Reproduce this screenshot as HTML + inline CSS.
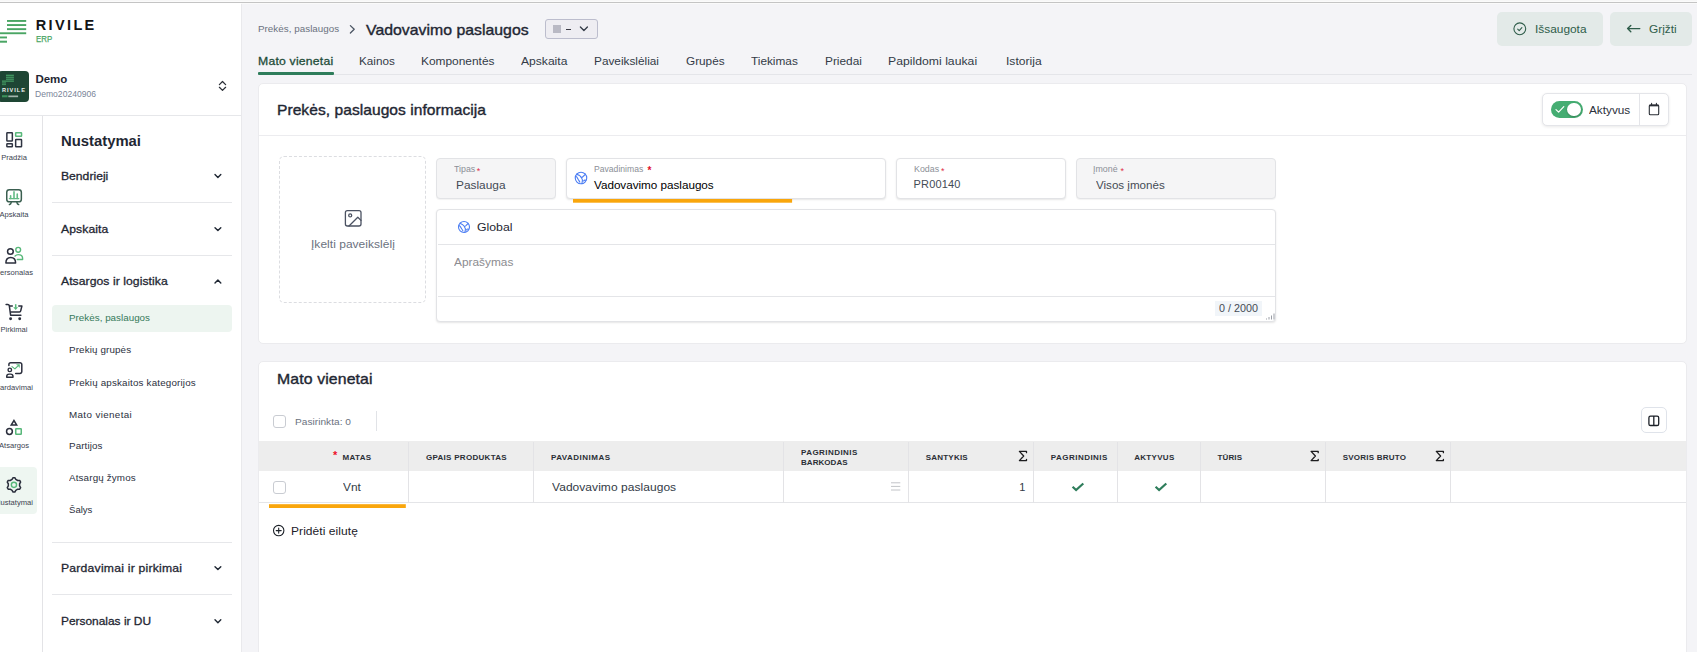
<!DOCTYPE html>
<html lang="lt"><head><meta charset="utf-8"><title>Rivile ERP</title>
<style>
*{box-sizing:border-box;margin:0;padding:0}
html,body{width:1697px;height:652px;overflow:hidden;background:#f4f4f7}
body{font-family:"Liberation Sans",sans-serif;-webkit-font-smoothing:antialiased}
#app{position:relative;width:1697px;height:652px;overflow:hidden;background:#f4f4f7}
.t{position:absolute;white-space:nowrap;font-family:"Liberation Sans",sans-serif}
.b{position:absolute}
svg{position:absolute;overflow:visible}
.card{background:#fff;border:1px solid #ebebee;border-radius:5px}
.fld{border:1px solid #e2e3e6;border-radius:4px;background:#fff;box-shadow:0 1px 2px rgba(0,0,0,.10)}
.fld.dis{background:#f5f5f6;box-shadow:0 1px 1px rgba(0,0,0,.05)}
.hl{height:1px;background:#e6e7ea}
.vl{width:1px;background:#e3e3e6}
.cb{width:13px;height:13px;border:1px solid #c9ccd2;border-radius:3px;background:#fff}
.btn{background:#e3eae8;border-radius:5px}

</style></head>
<body>
<div id="app">
<!-- browser top strip -->
<div class="b" style="left:0;top:0;width:1697px;height:2px;background:#f7f7f7"></div>
<div class="b" style="left:0;top:1px;width:1697px;height:1px;background:#fbfbfb"></div>
<div class="b" style="left:0;top:2px;width:1697px;height:1px;background:#c4c4c4"></div>
<div class="b" style="left:0;top:3px;width:1697px;height:1px;background:#fafafa"></div>

<!-- sidebar -->
<div class="b" style="left:0;top:3px;width:241px;height:649px;background:#fff"></div>
<div class="b vl" style="left:241px;top:4px;height:648px;background:#e9e9ec"></div>
<div class="b hl" style="left:0;top:115px;width:241px"></div>
<div class="b vl" style="left:42px;top:116px;height:536px"></div>

<!-- logo -->
<svg style="left:0;top:0" width="100" height="50" viewBox="0 0 100 50">
  <g fill="#4aa564">
    <rect x="7" y="20" width="19.2" height="1.9"/>
    <rect x="7" y="24.1" width="19.2" height="1.9"/>
    <rect x="7" y="28.2" width="19.2" height="1.9"/>
    <rect x="0" y="32.3" width="26.2" height="1.9"/>
    <rect x="0" y="36.5" width="7" height="1.9"/>
    <rect x="0" y="40.7" width="7" height="2"/>
  </g>
</svg>

<!-- company avatar -->
<div class="b" style="left:-2px;top:71px;width:31px;height:31px;border-radius:4px;background:#1e4634"></div>
<svg style="left:0;top:70px" width="30" height="34" viewBox="0 70 30 34">
  <g fill="#46a367">
    <rect x="6" y="74.700" width="7.900" height="1.150"/>
    <rect x="6" y="76.650" width="7.900" height="1.150"/>
    <rect x="6" y="78.600" width="7.900" height="1.150"/>
    <rect x="2" y="80.550" width="11.900" height="1.150"/>
    <rect x="2" y="82.400" width="4" height="1.100" opacity=".9"/>
    <rect x="2" y="84.100" width="4" height="1" opacity=".8"/>
  </g>
  <text x="1.900" y="92.300" font-family="Liberation Sans, sans-serif" font-weight="700" font-size="5.600" letter-spacing="1.020" fill="#eef2ef">RIVILE</text>
  <rect x="2" y="95.200" width="5.600" height="2.100" fill="#3f9a5f" opacity=".9"/>
  <rect x="8.300" y="95.500" width="9.800" height="1.700" fill="#cfdad4" opacity=".75"/>
</svg>
<svg style="left:216px;top:78px" width="14" height="16" viewBox="216 78 14 16" fill="none" stroke="#2b2f36" stroke-width="1.25" stroke-linecap="round" stroke-linejoin="round">
  <path d="M219.4 84.6l3.1-3.1 3.1 3.1M219.4 87.3l3.1 3.1 3.1-3.1"/>
</svg>

<!-- rail selected -->
<div class="b" style="left:-6px;top:467px;width:42.5px;height:46.5px;border-radius:4px;background:#eef6f1"></div>

<!-- rail icons -->
<svg style="left:0;top:125px" width="42" height="380" viewBox="0 125 42 380" fill="none" stroke-linecap="round" stroke-linejoin="round">
  <!-- Pradzia -->
  <g stroke="#2f3442" stroke-width="1.5" stroke-linejoin="miter">
    <rect x="6.85" y="132.65" width="5.5" height="8.3" rx=".5"/>
    <rect x="6.85" y="143.85" width="5.5" height="3" rx=".5"/>
    <rect x="15.65" y="139.5" width="5.9" height="7.35" rx=".5"/>
  </g>
  <rect x="15.65" y="132.65" width="5.9" height="3.7" rx=".5" stroke="#58b87a" stroke-width="1.5"/>
  <!-- Apskaita -->
  <g stroke="#3a5f50" stroke-width="1.500">
    <rect x="6.750" y="189.750" width="14.600" height="12" rx="2.600"/>
    <path d="M11.200 202.500c-.3 1.200-.9 1.800-1.800 2.100M16.900 202.500c.3 1.200.9 1.800 1.800 2.100"/>
  </g>
  <path d="M9.300 198.600h9.500" stroke="#63bb85" stroke-width="1.200" stroke-linecap="round"/>
  <path d="M10.600 198.500v-2.800M14 198.500v-6.600M17.250 198.500v-4.400" stroke="#63bb85" stroke-width="1.600" stroke-linecap="round"/>
  <!-- Personalas -->
  <g stroke="#2b2f3d" stroke-width="1.500">
    <circle cx="10.400" cy="251.500" r="2.850"/>
    <path d="M5.900 263c0-3.600 2-5.600 4.850-5.600s4.850 2 4.850 5.600z"/>
  </g>
  <g stroke="#58b87a" stroke-width="1.400">
    <circle cx="18.200" cy="249.800" r="2.400"/>
    <path d="M15 256.100c.8-.9 1.900-1.500 3.300-1.500c2.600 0 4.300 1.800 4.300 3.900v1h-5.300"/>
  </g>
  <!-- Pirkimai -->
  <g stroke="#2b2f3d" stroke-width="1.500">
    <path d="M6.100 304.500h1.700a1.500 1.500 0 0 1 1.500 1.200l1.300 9.500h10.300"/>
    <path d="M9.900 306h2.400M18.800 306h3.100l-1.200 4.900a1.300 1.300 0 0 1-1.300 1h-8.500"/>
  </g>
  <circle cx="10.600" cy="318.700" r="1.450" fill="#2b2f3d"/>
  <circle cx="19.700" cy="318.700" r="1.450" fill="#2b2f3d"/>
  <path d="M15.700 304.200v3.600" stroke="#58b87a" stroke-width="1.500" stroke-linecap="butt"/>
  <path d="M13.300 307.200h4.800l-2.400 2.800z" fill="#58b87a"/>
  <!-- Pardavimai -->
  <g stroke="#2b2f3d" stroke-width="1.500">
    <path d="M8.900 365.500v-.9a1.800 1.800 0 0 1 1.800-1.800h9.300a1.800 1.800 0 0 1 1.800 1.800v7a1.800 1.800 0 0 1-1.800 1.800h-4.300"/>
    <circle cx="9.800" cy="369.900" r="1.750" stroke-width="1.400"/>
    <path d="M6.700 377.300v-.8c0-1.600 1.200-2.400 2.300-2.400h1.700c1.100 0 2.300.8 2.300 2.400v.8z" stroke-width="1.400"/>
  </g>
  <path d="M12 366.600l2.900 2.300 2.600-2.600" stroke="#58b87a" stroke-width="1.200"/>
  <path d="M16.900 364.600h2.600v2.600z" fill="#58b87a" stroke="#58b87a" stroke-width=".5"/>
  <!-- Atsargos -->
  <g stroke="#2b2f3d" stroke-width="1.600">
    <path d="M13.950 420.500l2.750 4.500h-5.500z" stroke-linejoin="miter" stroke-width="1.450"/>
    <circle cx="9.450" cy="431.500" r="2.900" stroke-width="1.500"/>
  </g>
  <rect x="15.750" y="428.750" width="5.500" height="5.500" rx=".5" stroke="#58b87a" stroke-width="1.500"/>
  <!-- Nustatymai -->
  <path d="M13.07 477.65L14.83 477.65L15.82 479.41L17.72 480.51L19.74 480.49L20.62 482.02L19.59 483.75L19.59 485.95L20.62 487.68L19.74 489.21L17.72 489.19L15.82 490.29L14.83 492.05L13.07 492.05L12.08 490.29L10.18 489.19L8.16 489.21L7.28 487.68L8.31 485.95L8.31 483.75L7.28 482.02L8.16 480.49L10.18 480.51L12.08 479.41z" stroke="#2b2f3d" stroke-width="1.500"/>
  <circle cx="13.950" cy="484.850" r="2.600" stroke="#58b87a" stroke-width="1.400"/>
</svg>

<!-- menu -->
<div class="b hl" style="left:52px;top:202px;width:180px"></div>
<div class="b hl" style="left:52px;top:255px;width:180px"></div>
<div class="b hl" style="left:52px;top:542px;width:180px"></div>
<div class="b hl" style="left:52px;top:594px;width:180px"></div>
<div class="b" style="left:52.3px;top:305px;width:180px;height:26.6px;border-radius:4px;background:#edf5f0"></div>
<svg style="left:210px;top:160px" width="16" height="480" viewBox="210 160 16 480" fill="none" stroke="#1f2733" stroke-width="1.4" stroke-linecap="round" stroke-linejoin="round">
  <path d="M215 174.6l2.9 2.9 2.9-2.9"/>
  <path d="M215 227.7l2.9 2.9 2.9-2.9"/>
  <path d="M215 283l2.9-2.9 2.9 2.9"/>
  <path d="M215 566.7l2.9 2.9 2.9-2.9"/>
  <path d="M215 619.8l2.9 2.9 2.9-2.9"/>
</svg>

<!-- header -->
<svg style="left:346px;top:22px" width="12" height="14" viewBox="346 22 12 14" fill="none" stroke="#4b5563" stroke-width="1.3" stroke-linecap="round" stroke-linejoin="round">
  <path d="M350.4 25.6l3.8 3.7-3.8 3.7"/>
</svg>
<div class="b" style="left:545px;top:19px;width:53px;height:20px;border:1px solid #bcbdcd;border-radius:3px;background:#eeedf2"></div>
<div class="b" style="left:566.4px;top:29px;width:4.2px;height:1px;background:#3a3a44"></div>
<div class="b" style="left:552.8px;top:25.2px;width:8.4px;height:7.8px;background:#b9b9c4"></div>
<svg style="left:578px;top:24px" width="12" height="10" viewBox="578 24 12 10" fill="none" stroke="#333b47" stroke-width="1.3" stroke-linecap="round" stroke-linejoin="round">
  <path d="M580.4 27l3.5 3.5 3.5-3.5"/>
</svg>
<div class="b btn" style="left:1497px;top:12px;width:106px;height:34px"></div>
<div class="b btn" style="left:1610px;top:12px;width:82px;height:34px"></div>
<svg style="left:1510px;top:20px" width="20" height="18" viewBox="1510 20 20 18" fill="none" stroke="#2f5d4a" stroke-width="1.1" stroke-linecap="round" stroke-linejoin="round">
  <circle cx="1519.8" cy="28.8" r="5.9"/>
  <path d="M1517.700 29.100l1.500 1.500 2.700-2.900"/>
</svg>
<svg style="left:1624px;top:22px" width="20" height="14" viewBox="1624 22 20 14" fill="none" stroke="#2f5d4a" stroke-width="1.4" stroke-linecap="round" stroke-linejoin="round">
  <path d="M1627.6 28.6h12.2M1630.8 25.4l-3.2 3.2 3.2 3.2"/>
</svg>

<!-- tabs -->
<div class="b hl" style="left:258px;top:74px;width:1434px;background:#e4e5e9"></div>
<div class="b" style="left:258px;top:72px;width:76px;height:2.6px;background:#2e7d5b;border-radius:1px"></div>

<!-- card 1 -->
<div class="b card" style="left:258px;top:83px;width:1428.5px;height:260.5px"></div>
<div class="b hl" style="left:259px;top:135px;width:1426.5px;background:#ececef"></div>
<!-- aktyvus group -->
<div class="b" style="left:1542px;top:93px;width:127px;height:32.5px;border:1px solid #e4e5e9;border-radius:5px;background:#fff;box-shadow:0 1px 3px rgba(0,0,0,.09)"></div>
<div class="b vl" style="left:1639px;top:94px;height:30.5px;background:#e4e5e9"></div>
<div class="b" style="left:1551px;top:100.9px;width:32px;height:16.8px;border-radius:9px;background:#45ad72"></div>
<div class="b" style="left:1567.3px;top:102.6px;width:13.6px;height:13.6px;border-radius:7px;background:#fff;box-shadow:0 1px 2px rgba(0,0,0,.25)"></div>
<svg style="left:1553px;top:104px" width="14" height="12" viewBox="1553 104 14 12" fill="none" stroke="#fff" stroke-width="1.2" stroke-linecap="round" stroke-linejoin="round">
  <path d="M1556 109.6l2.6 2.5 5.2-5.4"/>
</svg>
<svg style="left:1646px;top:100px" width="16" height="18" viewBox="1646 100 16 18" fill="none" stroke="#2b2f36" stroke-width="1.1" stroke-linejoin="round">
  <rect x="1649.3" y="105" width="9.4" height="9.8" rx="1"/>
  <path d="M1649.3 105.500h9.400" stroke-width="1.700"/>
  <path d="M1651.6 103.4v2M1656.4 103.4v2" stroke-linecap="round"/>
</svg>

<!-- image upload -->
<div class="b" style="left:279px;top:156px;width:147px;height:147px;border:1px dashed #dcdde1;border-radius:5px;background:#fff"></div>
<svg style="left:343px;top:208px" width="20" height="20" viewBox="343 208 20 20" fill="none" stroke="#4b5262" stroke-width="1.3" stroke-linecap="round" stroke-linejoin="round">
  <rect x="345.4" y="210.6" width="15.6" height="15.4" rx="2"/>
  <circle cx="350.2" cy="215.4" r="1.5"/>
  <path d="M361 220.4l-3.2-3.2-8.8 8.8"/>
</svg>

<!-- fields -->
<div class="b fld dis" style="left:436px;top:158px;width:120px;height:40.5px"></div>
<div class="b fld" style="left:566px;top:158px;width:320px;height:40.5px"></div>
<div class="b fld" style="left:896px;top:158px;width:170px;height:40.5px"></div>
<div class="b fld dis" style="left:1076px;top:158px;width:200px;height:40.5px"></div>
<svg style="left:572px;top:196px" width="222" height="8" viewBox="572 196 222 8"><rect x="573" y="199" width="219.100" height="3.700" fill="#f9a60c"/></svg>
<div class="b fld" style="left:436px;top:209px;width:840px;height:113px"></div>
<div class="b hl" style="left:437.5px;top:244px;width:837px;background:#e4e5e8"></div>
<div class="b hl" style="left:437.5px;top:296px;width:837px;background:#e4e5e8"></div>
<div class="b" style="left:1215px;top:301.3px;width:46.8px;height:14.8px;background:#f1f5f9"></div>
<svg style="left:1262px;top:310px" width="14" height="12" viewBox="1262 310 14 12" fill="none" stroke="#9a9ea6" stroke-width="1">
  <path d="M1266.5 319.5v-1M1269 319.5v-2.5M1271.5 319.5v-4M1274 319.5v-6"/>
</svg>
<!-- globe icons -->
<svg style="left:571.8px;top:169.400px" width="18" height="18" viewBox="-9 -9 18 18" fill="none" stroke="#4b7df3" stroke-width="1.100" stroke-linecap="round" stroke-linejoin="round">
  <circle r="5.750"/>
  <path d="M-3.900 -4.200c.6 1.500 1.400 1.200 2.200 1.500c1 .4 1.200 1.900 2.200 2.100c1.200.2 1.600-1.100 2.400-1.700c.7-.5 1.200-.7 1.300-1.700M.5 -.600c-.2 1.100.8 1.500.9 2.600c.1 1.200-.4 2.300-.5 3.600M-5.300 -1.700c1.200.5 1.700 1.300 2.100 2.400c.4 1.300 1.700 2.100 2 3.400M2.600 3c.4-.8 1.400-1 2.300-.7"/>
</svg>
<svg style="left:454.8px;top:218px" width="18" height="18" viewBox="-9 -9 18 18" fill="none" stroke="#4b7df3" stroke-width="1.100" stroke-linecap="round" stroke-linejoin="round">
  <circle r="5.500"/>
  <path d="M-3.700 -4c.6 1.400 1.300 1.100 2.100 1.400c1 .4 1.100 1.800 2.100 2c1.100.2 1.500-1 2.300-1.600c.7-.5 1.100-.7 1.200-1.600M.5 -.600c-.2 1 .8 1.400.9 2.500c.1 1.100-.4 2.200-.5 3.400M-5 -1.600c1.100.5 1.600 1.200 2 2.300c.4 1.200 1.600 2 1.900 3.200M2.500 2.900c.4-.8 1.300-1 2.200-.7"/>
</svg>

<!-- card 2 -->
<div class="b card" style="left:258px;top:361px;width:1428.5px;height:300px"></div>
<div class="b cb" style="left:273px;top:415.300px"></div>
<div class="b vl" style="left:376px;top:411.300px;height:19.400px;background:#e1e3e7"></div>
<div class="b" style="left:1641px;top:407.200px;width:25.600px;height:26.300px;border:1px solid #dfe3ea;border-radius:5px;background:#fff"></div>
<svg style="left:1646px;top:413px" width="16" height="16" viewBox="1646 413 16 16" fill="none" stroke="#1c2128" stroke-width="1.3" stroke-linejoin="round">
  <rect x="1648.900" y="416.100" width="9.800" height="9.400" rx="1.600"/>
  <path d="M1653.800 416.100v9.400"/>
</svg>
<!-- table -->
<div class="b" style="left:259px;top:441px;width:1426.500px;height:29.500px;background:#ededed"></div>
<div class="b hl" style="left:259px;top:502px;width:1426.500px;background:#e4e5e8"></div>
<div class="b vl" style="left:408px;top:441.500px;height:61px"></div>
<div class="b vl" style="left:533px;top:441.500px;height:61px"></div>
<div class="b vl" style="left:783px;top:441.500px;height:61px"></div>
<div class="b vl" style="left:908px;top:441.500px;height:61px"></div>
<div class="b vl" style="left:1033px;top:441.500px;height:61px"></div>
<div class="b vl" style="left:1117px;top:441.500px;height:61px"></div>
<div class="b vl" style="left:1200px;top:441.500px;height:61px"></div>
<div class="b vl" style="left:1325px;top:441.500px;height:61px"></div>
<div class="b vl" style="left:1450px;top:441.500px;height:61px"></div>
<div class="b cb" style="left:273px;top:481.300px"></div>
<svg style="left:268px;top:502px" width="140" height="8" viewBox="268 502 140 8"><rect x="269" y="504.200" width="136.800" height="3.800" fill="#f9a60c"/></svg>
<svg style="left:889px;top:480px" width="14" height="14" viewBox="889 480 14 14" fill="none" stroke="#c2c4c8" stroke-width="1">
  <path d="M891 482.800h9.300M891 486.400h9.300M891 490h9.300"/>
</svg>
<svg style="left:1068px;top:479px" width="104" height="16" viewBox="1068 479 104 16" fill="none" stroke="#2e7d5b" stroke-width="2.2" stroke-linejoin="miter">
  <path d="M1072.600 486.800l3.500 3.300 7.200-6.600"/>
  <path d="M1155.600 486.800l3.500 3.300 7.200-6.600"/>
</svg>
<svg style="left:271px;top:523px" width="16" height="16" viewBox="271 523 16 16" fill="none" stroke="#1c2128" stroke-width="1.100" stroke-linecap="round">
  <circle cx="278.700" cy="530.600" r="5.200"/>
  <path d="M276.200 530.600h5M278.700 528.100v5"/>
</svg>

<!-- sigma icons -->
<svg style="left:1010px;top:446px" width="440" height="20" viewBox="1010 446 440 20" fill="none" stroke="#1d1d1f" stroke-width="1.300" stroke-linecap="round" stroke-linejoin="round">
  <path d="M1026.500 452.700v-1.300h-7.100l4.300 4.600l-4.300 4.600h7.100v-1.300"/>
  <path d="M1318.200 452.700v-1.300h-7.100l4.300 4.600l-4.300 4.600h7.100v-1.300"/>
  <path d="M1443.400 452.700v-1.300h-7.100l4.300 4.600l-4.300 4.600h7.100v-1.300"/>
</svg>

<!-- text -->
<div class="t" style="left:35.80px;top:17.73px;font-size:14.5px;line-height:14.5px;color:#141414;font-weight:700;letter-spacing:2.353px;">RIVILE</div>
<div class="t" style="left:35.80px;top:35.01px;font-size:9.2px;line-height:9.2px;color:#4aa564;-webkit-text-stroke:0.25px #4aa564;transform:scaleX(0.8569);transform-origin:left center;">ERP</div>
<div class="t" style="left:35.40px;top:73.97px;font-size:11.5px;line-height:11.5px;color:#1f2733;font-weight:700;letter-spacing:-0.051px;">Demo</div>
<div class="t" style="left:35.20px;top:89.97px;font-size:8.3px;line-height:8.3px;color:#7a8599;transform:scaleX(1.0331);transform-origin:left center;">Demo20240906</div>
<div class="t" style="left:14.00px;top:154.07px;font-size:7.6px;line-height:7.6px;color:#3b4350;transform:translateX(-50%);transform-origin:center center;">Pradžia</div>
<div class="t" style="left:14.00px;top:211.07px;font-size:7.6px;line-height:7.6px;color:#3b4350;transform:translateX(-50%);transform-origin:center center;">Apskaita</div>
<div class="t" style="left:14.00px;top:269.07px;font-size:7.6px;line-height:7.6px;color:#3b4350;transform:translateX(-50%);transform-origin:center center;">Personalas</div>
<div class="t" style="left:14.00px;top:326.07px;font-size:7.6px;line-height:7.6px;color:#3b4350;transform:translateX(-50%);transform-origin:center center;">Pirkimai</div>
<div class="t" style="left:14.00px;top:384.07px;font-size:7.6px;line-height:7.6px;color:#3b4350;transform:translateX(-50%);transform-origin:center center;">Pardavimai</div>
<div class="t" style="left:14.00px;top:441.57px;font-size:7.6px;line-height:7.6px;color:#3b4350;transform:translateX(-50%);transform-origin:center center;">Atsargos</div>
<div class="t" style="left:14.00px;top:499.07px;font-size:7.6px;line-height:7.6px;color:#3b4350;transform:translateX(-50%);transform-origin:center center;">Nustatymai</div>
<div class="t" style="left:60.50px;top:133.95px;font-size:14px;line-height:14px;color:#1f2733;font-weight:700;transform:scaleX(1.0600);transform-origin:left center;">Nustatymai</div>
<div class="t" style="left:60.80px;top:170.52px;font-size:11.2px;line-height:11.2px;color:#1f2733;-webkit-text-stroke:0.29px #1f2733;transform:scaleX(1.0862);transform-origin:left center;">Bendrieji</div>
<div class="t" style="left:60.80px;top:223.52px;font-size:11.2px;line-height:11.2px;color:#1f2733;-webkit-text-stroke:0.29px #1f2733;letter-spacing:0.068px;transform:scaleX(1.0900);transform-origin:left center;">Apskaita</div>
<div class="t" style="left:60.80px;top:276.32px;font-size:11.2px;line-height:11.2px;color:#1f2733;-webkit-text-stroke:0.29px #1f2733;letter-spacing:0.044px;transform:scaleX(1.0900);transform-origin:left center;">Atsargos ir logistika</div>
<div class="t" style="left:60.80px;top:562.82px;font-size:11.2px;line-height:11.2px;color:#1f2733;-webkit-text-stroke:0.29px #1f2733;letter-spacing:0.198px;transform:scaleX(1.0900);transform-origin:left center;">Pardavimai ir pirkimai</div>
<div class="t" style="left:60.80px;top:615.82px;font-size:11.2px;line-height:11.2px;color:#1f2733;-webkit-text-stroke:0.29px #1f2733;transform:scaleX(1.0643);transform-origin:left center;">Personalas ir DU</div>
<div class="t" style="left:68.60px;top:314.18px;font-size:9px;line-height:9px;color:#357a5a;letter-spacing:0.017px;transform:scaleX(1.0900);transform-origin:left center;">Prekės, paslaugos</div>
<div class="t" style="left:68.60px;top:346.13px;font-size:9px;line-height:9px;color:#2b3040;letter-spacing:0.120px;transform:scaleX(1.0900);transform-origin:left center;">Prekių grupės</div>
<div class="t" style="left:68.60px;top:378.88px;font-size:9px;line-height:9px;color:#2b3040;letter-spacing:0.155px;transform:scaleX(1.0900);transform-origin:left center;">Prekių apskaitos kategorijos</div>
<div class="t" style="left:68.60px;top:410.68px;font-size:9px;line-height:9px;color:#2b3040;letter-spacing:0.340px;transform:scaleX(1.0900);transform-origin:left center;">Mato vienetai</div>
<div class="t" style="left:68.60px;top:441.98px;font-size:9px;line-height:9px;color:#2b3040;letter-spacing:0.090px;transform:scaleX(1.0900);transform-origin:left center;">Partijos</div>
<div class="t" style="left:68.60px;top:473.98px;font-size:9px;line-height:9px;color:#2b3040;letter-spacing:0.138px;transform:scaleX(1.0900);transform-origin:left center;">Atsargų žymos</div>
<div class="t" style="left:68.60px;top:505.88px;font-size:9px;line-height:9px;color:#2b3040;transform:scaleX(1.0629);transform-origin:left center;">Šalys</div>
<div class="t" style="left:258.40px;top:24.58px;font-size:9px;line-height:9px;color:#6b7280;letter-spacing:0.028px;transform:scaleX(1.0900);transform-origin:left center;">Prekės, paslaugos</div>
<div class="t" style="left:365.80px;top:22.53px;font-size:14.5px;line-height:14.5px;color:#1f2733;-webkit-text-stroke:0.38px #1f2733;letter-spacing:0.017px;transform:scaleX(1.0900);transform-origin:left center;">Vadovavimo paslaugos</div>
<div class="t" style="left:1535.30px;top:23.69px;font-size:11px;line-height:11px;color:#2f5d4a;transform:scaleX(1.0796);transform-origin:left center;">Išsaugota</div>
<div class="t" style="left:1648.70px;top:23.69px;font-size:11px;line-height:11px;color:#2f5d4a;transform:scaleX(1.0790);transform-origin:left center;">Grįžti</div>
<div class="t" style="left:258.40px;top:55.52px;font-size:11.2px;line-height:11.2px;color:#1f4d3a;-webkit-text-stroke:0.29px #1f4d3a;letter-spacing:0.204px;transform:scaleX(1.0900);transform-origin:left center;">Mato vienetai</div>
<div class="t" style="left:358.70px;top:55.52px;font-size:11.2px;line-height:11.2px;color:#333b47;transform:scaleX(1.0462);transform-origin:left center;">Kainos</div>
<div class="t" style="left:420.90px;top:55.52px;font-size:11.2px;line-height:11.2px;color:#333b47;transform:scaleX(1.0645);transform-origin:left center;">Komponentės</div>
<div class="t" style="left:521.00px;top:55.52px;font-size:11.2px;line-height:11.2px;color:#333b47;transform:scaleX(1.0810);transform-origin:left center;">Apskaita</div>
<div class="t" style="left:593.80px;top:55.52px;font-size:11.2px;line-height:11.2px;color:#333b47;transform:scaleX(1.0558);transform-origin:left center;">Paveikslėliai</div>
<div class="t" style="left:686.40px;top:55.52px;font-size:11.2px;line-height:11.2px;color:#333b47;transform:scaleX(1.0521);transform-origin:left center;">Grupės</div>
<div class="t" style="left:750.90px;top:55.52px;font-size:11.2px;line-height:11.2px;color:#333b47;transform:scaleX(1.0554);transform-origin:left center;">Tiekimas</div>
<div class="t" style="left:824.70px;top:55.52px;font-size:11.2px;line-height:11.2px;color:#333b47;transform:scaleX(1.0595);transform-origin:left center;">Priedai</div>
<div class="t" style="left:888.40px;top:55.52px;font-size:11.2px;line-height:11.2px;color:#333b47;letter-spacing:0.018px;transform:scaleX(1.0900);transform-origin:left center;">Papildomi laukai</div>
<div class="t" style="left:1005.50px;top:55.52px;font-size:11.2px;line-height:11.2px;color:#333b47;transform:scaleX(1.0803);transform-origin:left center;">Istorija</div>
<div class="t" style="left:276.50px;top:103.10px;font-size:14.3px;line-height:14.3px;color:#1f2733;-webkit-text-stroke:0.37px #1f2733;letter-spacing:0.037px;transform:scaleX(1.0900);transform-origin:left center;">Prekės, paslaugos informacija</div>
<div class="t" style="left:1589.00px;top:104.89px;font-size:11px;line-height:11px;color:#2b313b;transform:scaleX(1.0697);transform-origin:left center;">Aktyvus</div>
<div class="t" style="left:310.80px;top:238.69px;font-size:11px;line-height:11px;color:#6b7280;letter-spacing:0.027px;transform:scaleX(1.0900);transform-origin:left center;">Įkelti paveikslėlį</div>
<div class="t" style="left:453.60px;top:166.46px;font-size:8.2px;line-height:8.2px;color:#8b8f97;transform:scaleX(1.0800);transform-origin:left center;">Tipas</div>
<div class="t" style="left:476.80px;top:166.58px;font-size:9px;line-height:9px;color:#e0314b;">*</div>
<div class="t" style="left:455.60px;top:180.09px;font-size:11px;line-height:11px;color:#444b55;transform:scaleX(1.0790);transform-origin:left center;">Paslauga</div>
<div class="t" style="left:594.00px;top:166.26px;font-size:8.2px;line-height:8.2px;color:#8b8f97;transform:scaleX(1.0500);transform-origin:left center;">Pavadinimas</div>
<div class="t" style="left:647.60px;top:166.13px;font-size:10px;line-height:10px;color:#e0102b;font-weight:700;">*</div>
<div class="t" style="left:594.00px;top:178.60px;font-size:11.7px;line-height:11.7px;color:#000;letter-spacing:-0.015px;">Vadovavimo paslaugos</div>
<div class="t" style="left:913.60px;top:166.46px;font-size:8.2px;line-height:8.2px;color:#8b8f97;transform:scaleX(1.0800);transform-origin:left center;">Kodas</div>
<div class="t" style="left:941.00px;top:166.58px;font-size:9px;line-height:9px;color:#e0314b;">*</div>
<div class="t" style="left:913.60px;top:179.09px;font-size:11px;line-height:11px;color:#444b55;letter-spacing:0.154px;">PR00140</div>
<div class="t" style="left:1093.40px;top:166.46px;font-size:8.2px;line-height:8.2px;color:#8b8f97;transform:scaleX(1.0800);transform-origin:left center;">Įmonė</div>
<div class="t" style="left:1120.50px;top:166.58px;font-size:9px;line-height:9px;color:#e0314b;">*</div>
<div class="t" style="left:1095.70px;top:180.29px;font-size:11px;line-height:11px;color:#444b55;transform:scaleX(1.0534);transform-origin:left center;">Visos įmonės</div>
<div class="t" style="left:477.20px;top:222.03px;font-size:11.3px;line-height:11.3px;color:#1f2733;transform:scaleX(1.0871);transform-origin:left center;">Global</div>
<div class="t" style="left:453.60px;top:257.19px;font-size:11px;line-height:11px;color:#8c8c90;transform:scaleX(1.0794);transform-origin:left center;">Aprašymas</div>
<div class="t" style="left:1219.10px;top:303.74px;font-size:10px;line-height:10px;color:#444b55;transform:scaleX(1.0759);transform-origin:left center;">0 / 2000</div>
<div class="t" style="left:277.00px;top:371.83px;font-size:14.5px;line-height:14.5px;color:#1f2733;-webkit-text-stroke:0.38px #1f2733;letter-spacing:0.114px;transform:scaleX(1.0900);transform-origin:left center;">Mato vienetai</div>
<div class="t" style="left:294.50px;top:417.63px;font-size:9.3px;line-height:9.3px;color:#6b7280;letter-spacing:0.018px;transform:scaleX(1.0900);transform-origin:left center;">Pasirinkta: 0</div>
<div class="t" style="left:333.00px;top:449.89px;font-size:11px;line-height:11px;color:#ee1028;font-weight:700;">*</div>
<div class="t" style="left:342.50px;top:454.13px;font-size:8px;line-height:8px;color:#2b2f36;font-weight:700;letter-spacing:0.334px;">MATAS</div>
<div class="t" style="left:425.90px;top:454.13px;font-size:8px;line-height:8px;color:#2b2f36;font-weight:700;letter-spacing:0.299px;">GPAIS PRODUKTAS</div>
<div class="t" style="left:550.90px;top:454.13px;font-size:8px;line-height:8px;color:#2b2f36;font-weight:700;letter-spacing:0.497px;">PAVADINIMAS</div>
<div class="t" style="left:801.00px;top:448.83px;font-size:8px;line-height:8px;color:#2b2f36;font-weight:700;letter-spacing:0.444px;">PAGRINDINIS</div>
<div class="t" style="left:801.00px;top:458.93px;font-size:8px;line-height:8px;color:#2b2f36;font-weight:700;letter-spacing:0.052px;">BARKODAS</div>
<div class="t" style="left:925.70px;top:454.13px;font-size:8px;line-height:8px;color:#2b2f36;font-weight:700;letter-spacing:0.221px;">SANTYKIS</div>
<div class="t" style="left:1050.80px;top:454.13px;font-size:8px;line-height:8px;color:#2b2f36;font-weight:700;letter-spacing:0.474px;">PAGRINDINIS</div>
<div class="t" style="left:1134.20px;top:454.13px;font-size:8px;line-height:8px;color:#2b2f36;font-weight:700;letter-spacing:0.311px;">AKTYVUS</div>
<div class="t" style="left:1217.50px;top:454.13px;font-size:8px;line-height:8px;color:#2b2f36;font-weight:700;letter-spacing:0.125px;">TŪRIS</div>
<div class="t" style="left:1342.70px;top:454.13px;font-size:8px;line-height:8px;color:#2b2f36;font-weight:700;letter-spacing:0.223px;">SVORIS BRUTO</div>
<div class="t" style="left:343.10px;top:482.19px;font-size:11px;line-height:11px;color:#333b47;transform:scaleX(1.0838);transform-origin:left center;">Vnt</div>
<div class="t" style="left:551.60px;top:482.19px;font-size:11px;line-height:11px;color:#333b47;letter-spacing:0.049px;transform:scaleX(1.0900);transform-origin:left center;">Vadovavimo paslaugos</div>
<div class="t" style="left:1019.30px;top:482.19px;font-size:11px;line-height:11px;color:#333b47;">1</div>
<div class="t" style="left:290.60px;top:525.99px;font-size:11px;line-height:11px;color:#1c2128;letter-spacing:0.064px;transform:scaleX(1.0900);transform-origin:left center;">Pridėti eilutę</div>
</div>
</body></html>
